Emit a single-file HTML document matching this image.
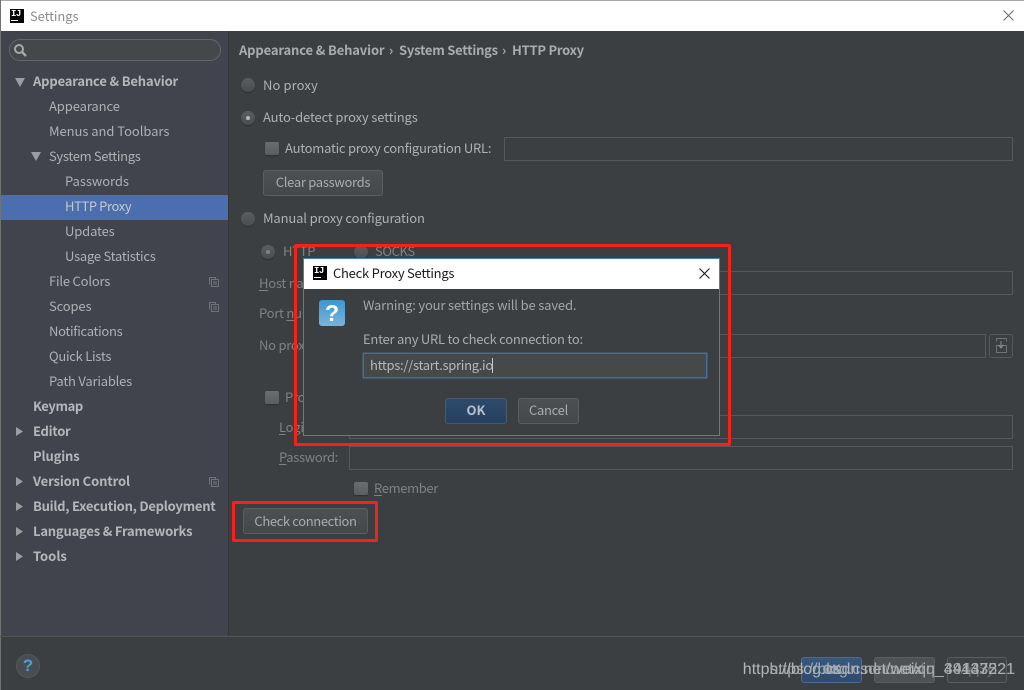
<!DOCTYPE html>
<html><head><meta charset="utf-8"><style>
html,body{margin:0;padding:0;width:1024px;height:690px;overflow:hidden;background:#3c3f41}
*{box-sizing:border-box}
#p{position:relative;width:1024px;height:690px;overflow:hidden;background:#3c3f41;font:13px/18px "Noto Sans CJK SC","Liberation Sans",sans-serif;color:#9a9d9f}
#p div,#p span.a,#p svg{position:absolute}
.t{white-space:nowrap;height:18px;letter-spacing:-.25px}
.s{color:#adb1b4}
.b{font-weight:700;color:#b4b7ba}
.d{color:#7f8284}
u{text-decoration:underline;text-underline-offset:2px}
.r{width:14px;height:14px;border-radius:50%;background:linear-gradient(#5b5e60,#4a4d4f);box-shadow:0 1px 1px #2d2f30}
.c{width:14px;height:13px;border-radius:2px;background:linear-gradient(#6b6e70,#5a5d5f);box-shadow:0 1px 1px #2d2f30}
.i{border:1px solid #56595b;background:#3c3f41;height:24px}
.btn{border:1px solid #5b5e60;border-radius:3px;background:linear-gradient(#4d5052,#45484a);color:#a9acae;text-align:center;height:26px;line-height:22px;white-space:nowrap;letter-spacing:-.3px}
.red{border:3px solid #f5221a;border-radius:2px}
.ij{width:14px;height:14px;background:#000;color:#fff;font:700 9px/9px "Liberation Mono",monospace;letter-spacing:-.5px;padding:1px 0 0 1px;text-align:left}
</style></head><body><div id="p">
<div style="left:0;top:0;width:1024px;height:31px;background:#fff;border-top:1px solid #a9a9a9"></div>
<div style="left:0;top:0;width:1px;height:690px;background:#6f7173"></div>
<div class="ij" style="left:10px;top:9px">IJ<div style="left:1px;top:11px;width:7px;height:1px;background:#fff"></div></div>
<div class="t" style="left:30px;top:7px;color:#8d8d8d;letter-spacing:-.1px">Settings</div>
<svg style="left:1003px;top:10px" width="11" height="11"><path d="M.5.5l10 10M10.5.5l-10 10" stroke="#6a6a6a" fill="none"/></svg>

<div style="left:1px;top:31px;width:228px;height:605px;background:#41444c"></div>
<div style="left:228px;top:31px;width:1px;height:605px;background:#323436"></div>
<div style="left:0;top:636px;width:1024px;height:1px;background:#515355"></div>

<div style="left:9px;top:39px;width:212px;height:22px;border:1px solid #646769;border-radius:11px;background:#45484a"></div>
<svg style="left:13px;top:43px" width="16" height="15"><circle cx="6" cy="6" r="4" stroke="#a6a9ab" stroke-width="2" fill="none"/><path d="M9 9l4 4" stroke="#a6a9ab" stroke-width="2.4"/></svg>

<svg style="left:0;top:70px" width="60" height="500" fill="#9b9ea0">
<path d="M15 8h10l-5 9zM31 82h10l-5 9z"/>
<path d="M16 357l7 4.5-7 4.5zM16 407l7 4.5-7 4.5zM16 432l7 4.5-7 4.5zM16 457l7 4.5-7 4.5zM16 482l7 4.5-7 4.5z"/>
</svg>
<div class="t b" style="left:33px;top:72px;letter-spacing:-.17px">Appearance &amp; Behavior</div>
<div class="t s" style="left:49px;top:97px;letter-spacing:-.1px">Appearance</div>
<div class="t s" style="left:49px;top:122px;letter-spacing:-.05px">Menus and Toolbars</div>
<div class="t s" style="left:49px;top:147px;letter-spacing:-.33px">System Settings</div>
<div class="t s" style="left:65px;top:172px;letter-spacing:-.05px">Passwords</div>
<div style="left:1px;top:195px;width:227px;height:25px;background:#4b6eaf"></div>
<div class="t" style="left:65px;top:197px;color:#c5c9cd;letter-spacing:-.4px">HTTP Proxy</div>
<div class="t s" style="left:65px;top:222px;letter-spacing:-.14px">Updates</div>
<div class="t s" style="left:65px;top:247px">Usage Statistics</div>
<div class="t s" style="left:49px;top:272px;letter-spacing:-.2px">File Colors</div>
<div class="t s" style="left:49px;top:297px;letter-spacing:-.15px">Scopes</div>
<div class="t s" style="left:49px;top:322px;letter-spacing:-.3px">Notifications</div>
<div class="t s" style="left:49px;top:347px;letter-spacing:-.27px">Quick Lists</div>
<div class="t s" style="left:49px;top:372px;letter-spacing:-.2px">Path Variables</div>
<div class="t b" style="left:33px;top:397px;letter-spacing:-.4px">Keymap</div>
<div class="t b" style="left:33px;top:422px;letter-spacing:-.3px">Editor</div>
<div class="t b" style="left:33px;top:447px;letter-spacing:-.15px">Plugins</div>
<div class="t b" style="left:33px;top:472px;letter-spacing:-.13px">Version Control</div>
<div class="t b" style="left:33px;top:497px">Build, Execution, Deployment</div>
<div class="t b" style="left:33px;top:522px;letter-spacing:-.2px">Languages &amp; Frameworks</div>
<div class="t b" style="left:33px;top:547px;letter-spacing:0">Tools</div>
<svg style="left:209px;top:277px" width="10" height="210" fill="none" stroke="#6f7276">
<path d="M.5 7.500v-7h6v2"/><path d="M2.500 2.500h7v7h-7zM4 5h4M4 7h4"/>
<path d="M.5 32.500v-7h6v2"/><path d="M2.500 27.500h7v7h-7zM4 30h4M4 32h4"/>
<path d="M.5 207.500v-7h6v2"/><path d="M2.500 202.500h7v7h-7zM4 205h4M4 207h4"/>
</svg>

<div class="t b" style="left:239px;top:41px;color:#a9acae;letter-spacing:-.15px">Appearance &amp; Behavior</div>
<div class="t b" style="left:389px;top:41px;color:#a9acae">&#8250;</div>
<div class="t b" style="left:399px;top:41px;color:#a9acae">System Settings</div>
<div class="t b" style="left:502px;top:41px;color:#a9acae">&#8250;</div>
<div class="t b" style="left:512px;top:41px;color:#a9acae">HTTP Proxy</div>

<div class="r" style="left:241px;top:78px"></div>
<div class="t s" style="left:263px;top:76px;letter-spacing:.1px">No proxy</div>
<div class="r" style="left:241px;top:111px"></div><div style="left:246px;top:116px;width:4px;height:4px;border-radius:50%;background:#b5b8ba"></div>
<div class="t s" style="left:263px;top:108px;letter-spacing:-.15px">Auto-detect proxy settings</div>
<div class="c" style="left:265px;top:142px"></div>
<div class="t s" style="left:285px;top:139px">Automatic proxy configuration URL:</div>
<div class="i" style="left:504px;top:137px;width:509px"></div>
<div class="btn" style="left:263px;top:170px;width:120px">Clear passwords</div>
<div class="r" style="left:241px;top:212px"></div>
<div class="t s" style="left:263px;top:209px;letter-spacing:-.15px">Manual proxy configuration</div>

<div class="r" style="left:261px;top:245px"></div><div style="left:266px;top:250px;width:4px;height:4px;border-radius:50%;background:#7f8284"></div>
<div class="t d" style="left:283px;top:242px">HTTP</div>
<div class="r" style="left:354px;top:245px"></div>
<div class="t d" style="left:375px;top:242px;letter-spacing:-.4px">SOCKS</div>
<div class="t d" style="left:259px;top:274px"><u>H</u>ost name:</div>
<div class="i" style="left:349px;top:271px;width:664px"></div>
<div class="t d" style="left:259px;top:304px">Port <u>n</u>umber:</div>
<div class="i" style="left:349px;top:302px;width:100px"></div>
<div class="t d" style="left:259px;top:336px">No proxy for:</div>
<div class="i" style="left:349px;top:334px;width:637px"></div>
<div style="left:989px;top:334px;width:24px;height:24px;border:1px solid #555859;border-radius:3px"></div>
<svg style="left:993px;top:338px" width="16" height="16" fill="none" stroke="#6f7274"><path d="M3.500 3.500v-3h10v3"/><path d="M3.500 7.500h10v7h-10z"/><path d="M8 3v6M5.500 7l2.500 3 2.500-3" stroke="#8a8d8f"/></svg>
<div class="c" style="left:265px;top:391px"></div>
<div class="t d" style="left:285px;top:388px">Proxy authentication</div>
<div class="t d" style="left:279px;top:418px"><u>L</u>ogin:</div>
<div class="i" style="left:349px;top:415px;width:664px"></div>
<div class="t d" style="left:279px;top:448px;letter-spacing:-.33px"><u>P</u>assword:</div>
<div class="i" style="left:349px;top:446px;width:664px"></div>
<div class="c" style="left:354px;top:482px"></div>
<div class="t d" style="left:374px;top:479px;letter-spacing:-.37px"><u>R</u>emember</div>
<div class="btn" style="left:243px;top:508px;width:125px;letter-spacing:-.37px;line-height:24px">Check connection</div>
<div class="red" style="left:232px;top:501px;width:146px;height:41px"></div>

<div style="left:16px;top:654px;width:24px;height:24px;border-radius:50%;background:#4a4d4f;border:1px solid #55585a"></div>
<div style="left:16px;top:654px;width:24px;height:24px;text-align:center;font:700 17px/24px 'Liberation Sans',sans-serif;color:#4a9fd3">?</div>
<div class="btn" style="left:801px;top:657px;width:61px;background:linear-gradient(#365880,#2f4a6c);border-color:#4a6a8e;color:#8fa3b8;font-weight:700">OK</div>
<div class="btn" style="left:874px;top:657px;width:61px;background:#4f5254;color:#85888a">Cancel</div>
<div class="btn" style="left:947px;top:657px;width:60px;background:#3f4244;color:#6d6f71">Apply</div>
<div class="t" style="right:9px;top:661px;font:16px/18px 'Liberation Sans',sans-serif;color:#b3b5b6;letter-spacing:0">https://blog.csdn.net/weixin_44137221</div>
<div class="t" style="right:9px;top:661px;font:16px/18px 'Liberation Sans',sans-serif;color:#a6a8a9;letter-spacing:0">https://blog.csdn.net/qq_39443521</div>

<div class="red" style="left:294px;top:244px;width:437px;height:202px"></div>
<div style="left:303px;top:258px;width:417px;height:178px;background:#3c3f41;border:1px solid #3a85c4"></div>
<div style="left:304px;top:259px;width:415px;height:30px;background:#fff"></div>
<div class="ij" style="left:313px;top:266px">IJ<div style="left:1px;top:11px;width:7px;height:1px;background:#fff"></div></div>
<div class="t" style="left:333px;top:264px;color:#1a1a1a">Check Proxy Settings</div>
<svg style="left:699px;top:268px" width="11" height="11"><path d="M.5.5l10 10M10.5.5l-10 10" stroke="#111" fill="none"/></svg>
<div style="left:319px;top:300px;width:26px;height:26px;border-radius:3px;background:linear-gradient(#3f95cf,#76b5dc)"></div>
<div style="left:319px;top:300px;width:26px;height:26px;text-align:center;font:700 23px/27px 'Liberation Sans',sans-serif;color:#fff">?</div>
<div class="t" style="left:363px;top:296px;color:#a3a6a8;letter-spacing:-.16px">Warning: your settings will be saved.</div>
<div class="t" style="left:363px;top:330px;color:#a9acae">Enter any URL to check connection to:</div>
<div style="left:363px;top:353px;width:344px;height:25px;background:#45494a;border:1px solid #466d94;box-shadow:0 0 0 .5px #466d94"></div>
<div class="t" style="left:370px;top:356px;color:#b5b8ba;letter-spacing:-.3px">https://start.spring.io</div>
<div style="left:492px;top:358px;width:1px;height:15px;background:#c5c8ca"></div>
<div class="btn" style="left:445px;top:398px;width:62px;background:linear-gradient(#2d4a6d,#27405f);font-weight:700;color:#b4c0cc;border-color:#4a5a6a;letter-spacing:0">OK</div>
<div class="btn" style="left:518px;top:398px;width:61px">Cancel</div>
</div></body></html>
